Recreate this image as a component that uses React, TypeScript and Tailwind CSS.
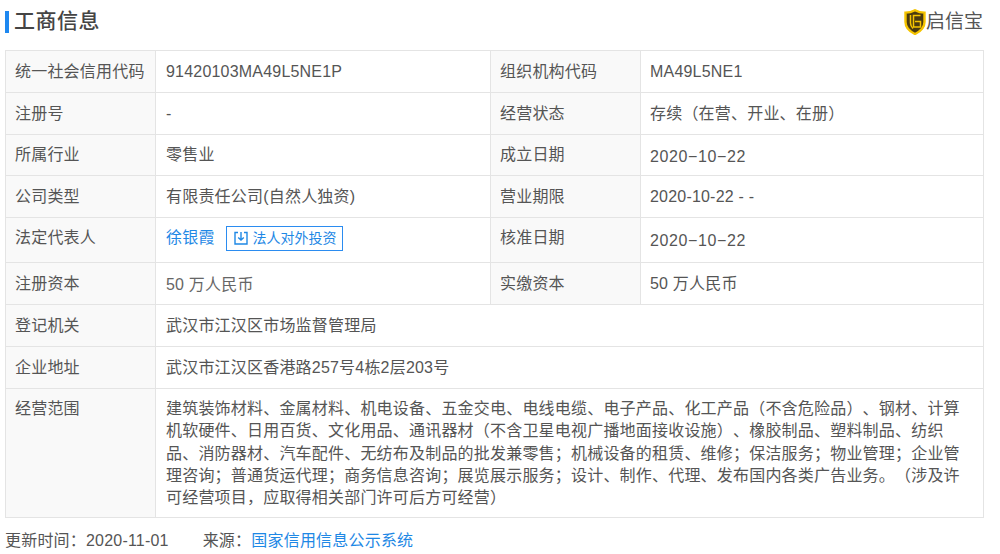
import React from 'react';

const rows = [
  ['统一社会信用代码', '91420103MA49L5NE1P', '组织机构代码', 'MA49L5NE1'],
  ['注册号', '-', '经营状态', '存续（在营、开业、在册）'],
];

const labelCls = 'whitespace-nowrap border border-[#e4e4e4] bg-[#f9f9f9] pl-[9px] pr-0 text-left align-middle font-normal text-[#555]';
const valueCls = 'border border-[#e4e4e4] px-[10px] align-middle text-[#555]';
const rightCls = 'border border-[#e4e4e4] pl-[9px] pr-[10px] align-middle text-[#555]';
const dateCls = 'pt-[3px] tracking-[0.6px]';

const App = () => {
  return (
    <div className="h-[554px] w-[1000px] overflow-hidden bg-white font-['Liberation_Sans','Noto_Sans_CJK_SC',sans-serif] text-[16px] leading-[22px] tracking-[0.2px] text-[#555] [text-spacing-trim:space-all]">
      <div className="flex h-[50px] items-start justify-between pl-[5px] pr-[17px] pt-[8px]">
        <div className="flex items-center pt-[2px]">
          <div className="h-[22px] w-[4px] bg-[#1e88f0]" />
          <h1 className="ml-[5px] pb-[2px] text-[21px] font-medium leading-[22px] tracking-[0.5px] text-[#444]">工商信息</h1>
        </div>
        <div className="flex items-center">
          <svg width="22" height="26" viewBox="0 0 22 26">
            <path d="M11 1.2 C14 2.8 17 3.6 20.5 3.6 V13 C20.5 19 16 22.6 11 25 C6 22.6 1.5 19 1.5 13 V3.6 C5 3.6 8 2.8 11 1.2 Z" fill="#4a3a10" stroke="#f5c400" strokeWidth="2.4" />
            <path d="M6.5 6 V14 C6.5 16.5 7.5 18 9 19.5" fill="none" stroke="#f5c400" strokeWidth="1.5" />
            <path d="M16.5 6.5 H9.5 V18 H16.5 V12.5 H11" fill="none" stroke="#f5c400" strokeWidth="1.5" />
          </svg>
          <span className="pt-[1px] text-[19px] leading-[26px] tracking-normal text-[#555]">启信宝</span>
        </div>
      </div>

      <table className="ml-[5px] w-[978px] table-fixed border-collapse">
        <colgroup>
          <col className="w-[150px]" />
          <col className="w-[335px]" />
          <col className="w-[150px]" />
          <col className="w-[343px]" />
        </colgroup>
        <tbody>
          {rows.map((r) => (
            <tr key={r[0]} className="h-[42px]">
              <th className={labelCls}>{r[0]}</th>
              <td className={valueCls}>{r[1]}</td>
              <th className={labelCls}>{r[2]}</th>
              <td className={rightCls}>{r[3]}</td>
            </tr>
          ))}
          <tr className="h-[41px]">
            <th className={labelCls}>所属行业</th>
            <td className={valueCls}>零售业</td>
            <th className={labelCls}>成立日期</th>
            <td className={rightCls}>
              <div className={dateCls}>2020−10−22</div>
            </td>
          </tr>
          <tr className="h-[42px]">
            <th className={labelCls}>公司类型</th>
            <td className={valueCls}>有限责任公司(自然人独资)</td>
            <th className={labelCls}>营业期限</th>
            <td className={rightCls}>2020-10-22 - -</td>
          </tr>
          <tr className="h-[45px]">
            <th className={`${labelCls} pb-[4px]`}>法定代表人</th>
            <td className={`${valueCls} pb-[4px]`}>
              <div className="flex items-center">
                <span className="text-[#1e88e5]">徐银霞</span>
                <span className="ml-[11px] flex h-[25px] w-[117px] items-center border border-[#2b8cf0] pl-[6px] text-[14px] tracking-normal text-[#1e88e5]">
                  <svg width="16" height="16" viewBox="0 0 16 16" fill="none" stroke="#1e88e5" strokeWidth="1.4">
                    <path d="M5 2.5 H2 V14 H14 V2.5 H11" />
                    <path d="M8 2 V10 M5.2 7.4 L8 10 L10.8 7.4" />
                  </svg>
                  <span className="ml-[4px]">法人对外投资</span>
                </span>
              </div>
            </td>
            <th className={`${labelCls} pb-[4px]`}>核准日期</th>
            <td className={rightCls}>
              <div className="pt-[1px] tracking-[0.6px]">2020−10−22</div>
            </td>
          </tr>
          <tr className="h-[42px]">
            <th className={labelCls}>注册资本</th>
            <td className={valueCls}>
              <div className="pt-[3px] text-[#666]">50 万人民币</div>
            </td>
            <th className={labelCls}>实缴资本</th>
            <td className={rightCls}>50 万人民币</td>
          </tr>
          <tr className="h-[42px]">
            <th className={labelCls}>登记机关</th>
            <td className={valueCls} colSpan={3}>武汉市江汉区市场监督管理局</td>
          </tr>
          <tr className="h-[42px]">
            <th className={labelCls}>企业地址</th>
            <td className={valueCls} colSpan={3}>武汉市江汉区香港路257号4栋2层203号</td>
          </tr>
          <tr className="h-[129px]">
            <th className={`${labelCls} !align-top pt-[9px]`}>经营范围</th>
            <td className={`${valueCls} !align-top pt-[9px] pr-[14px] leading-[22.25px]`} colSpan={3}>
              建筑装饰材料、金属材料、机电设备、五金交电、电线电缆、电子产品、化工产品（不含危险品）、钢材、计算机软硬件、日用百货、文化用品、通讯器材（不含卫星电视广播地面接收设施）、橡胶制品、塑料制品、纺织品、消防器材、汽车配件、无纺布及制品的批发兼零售；机械设备的租赁、维修；保洁服务；物业管理；企业管理咨询；普通货运代理；商务信息咨询；展览展示服务；设计、制作、代理、发布国内各类广告业务。（涉及许可经营项目，应取得相关部门许可后方可经营）
            </td>
          </tr>
        </tbody>
      </table>

      <div className="mt-[12px] flex pl-[5px] leading-[22px] text-[#555]">
        <span>更新时间：2020-11-01</span>
        <span className="ml-[34px]">来源：</span>
        <span className="text-[#1e88e5]">国家信用信息公示系统</span>
      </div>
    </div>
  );
};

export default App;
